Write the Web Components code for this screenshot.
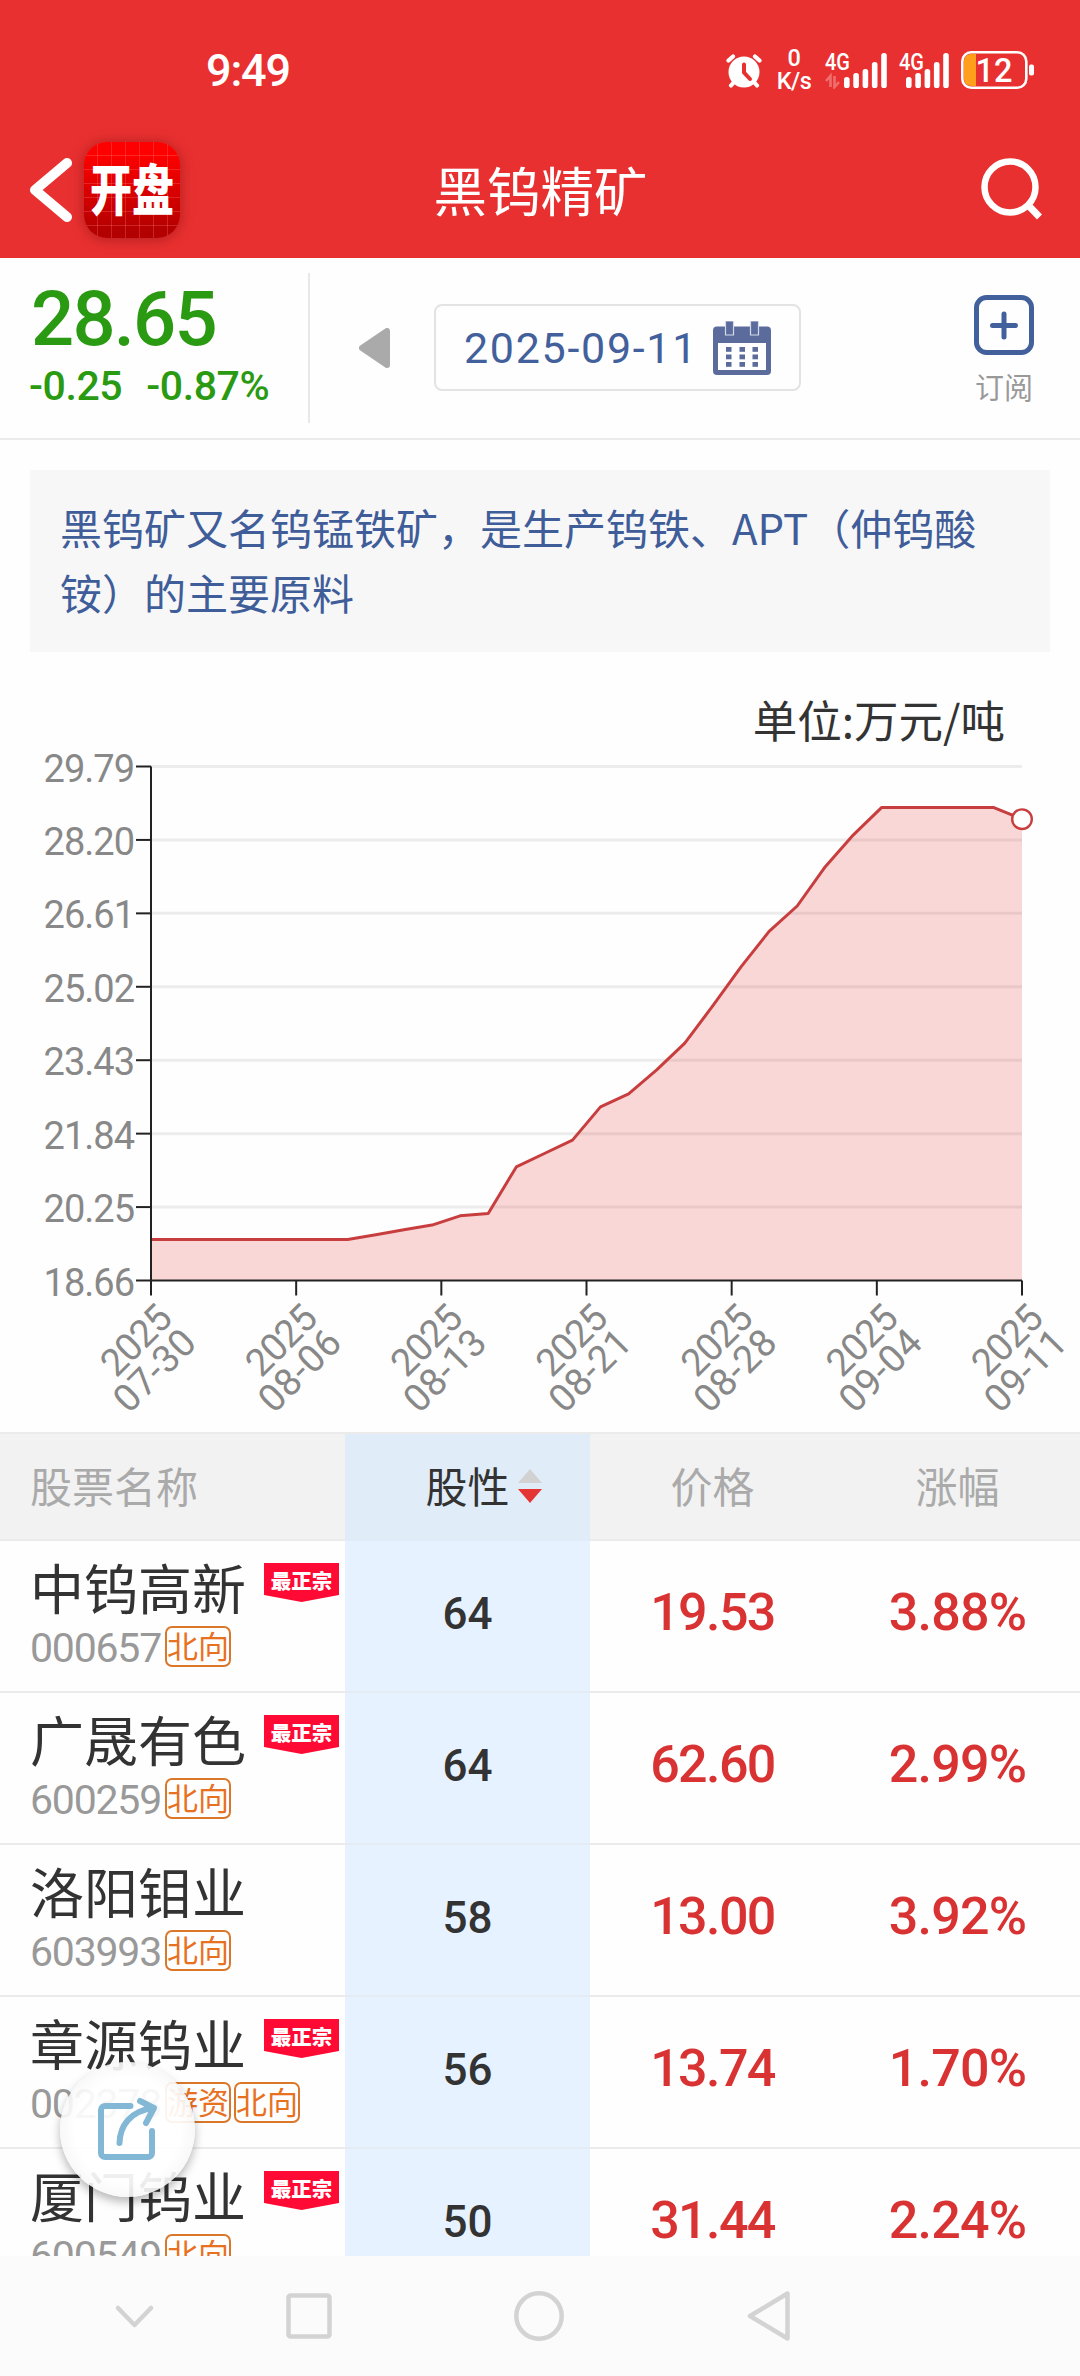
<!DOCTYPE html>
<html lang="zh-CN">
<head>
<meta charset="utf-8">
<title>黑钨精矿</title>
<style>
	body {
		--cjk: "Noto Sans CJK SC", sans-serif;
		--num: Roboto, "Noto Sans CJK SC", sans-serif;
		--red: #e93030;
		--line: #ebebec;
		margin: 0;
		width: 1080px;
		height: 2376px;
		overflow: hidden;
		display: flex;
		flex-direction: column;
		background: #fefefe;
		color: #333;
		font-family: var(--cjk);
	}
</style>
</head>
<body>
	<app-header>黑钨精矿</app-header>
	<price-summary price="28.65" change="-0.25" percent="-0.87%" date="2025-09-11">订阅</price-summary>
	<info-note>黑钨矿又名钨锰铁矿，是生产钨铁、APT（仲钨酸铵）的主要原料</info-note>
	<price-chart unit="单位:万元/吨"></price-chart>
	<stock-table>
		<stock-row code="000657" score="64" price="19.53" rise="3.88%" tags="北向" best>中钨高新</stock-row>
		<stock-row code="600259" score="64" price="62.60" rise="2.99%" tags="北向" best>广晟有色</stock-row>
		<stock-row code="603993" score="58" price="13.00" rise="3.92%" tags="北向">洛阳钼业</stock-row>
		<stock-row code="002378" score="56" price="13.74" rise="1.70%" tags="游资 北向" best>章源钨业</stock-row>
		<stock-row code="600549" score="50" price="31.44" rise="2.24%" tags="北向" best>厦门钨业</stock-row>
	</stock-table>
	<share-button></share-button>
	<nav-bar></nav-bar>

<script>
(() => {
	// registers an element whose shadow root is built by render(el)
	const define = (name, render) => {
		!customElements.get(name) &&
			customElements.define(
				name,
				class extends HTMLElement {
					constructor() {
						super();
						this.sr = this.attachShadow({ mode: "open" });
					}

					connectedCallback() {
						this.sr.innerHTML = render(this);
					}
				}
			);
	};

	define("status-bar", () => {
		const bars = [11, 15, 19, 26, 35]
			.map((h, i) => `<rect x="${i * 9.3}" y="${35 - h}" width="5.6" height="${h}" rx="2.6"/>`)
			.join("");
		return `
			<style>
				:host {
					display: flex;
					align-items: center;
					height: 140px;
					padding: 0 46px 0 206px;
					color: #fff;
					font-family: var(--num);
				}
				.time { font-size: 45px; font-weight: 500; letter-spacing: -1.2px; margin-right: auto }
				svg { display: block; fill: currentcolor }
				.speed {
					width: 36px;
					margin: 0 13px 0 14px;
					text-align: center;
					font-size: 23.500px;
					line-height: 23px;
				}
				.speed div { font-weight: 500; letter-spacing: -0.5px }
				.battery { margin-left: 12px }
				text { font-weight: 500 }
			</style>
			<span class="time">9:49</span>
			<svg width="36" height="36" viewBox="0 0 36 36">
				<circle cx="18" cy="20" r="15.5"/>
				<g fill="none" stroke="currentcolor" stroke-width="4.2" stroke-linecap="round">
					<path d="M2.5 8.500L7 4.500M33.500 8.500L29 4.500M8 30L5 33.500M28 30L31 33.500"/>
					<path d="M18 12.500V20.500L24 27" stroke="#e93030" stroke-width="4"/>
				</g>
			</svg>
			<div class="speed"><div>0</div><div>K/s</div></div>
			<svg width="63" height="37" viewBox="0 0 63 37">
				<text x="0" y="18" font-size="23.500" textLength="25" lengthAdjust="spacingAndGlyphs">4G</text>
				<path d="M5.500 35V24L1 29M9.500 24V35L14 30" fill="none" stroke="#fff" stroke-width="2.600" opacity=".3"/>
				<g transform="translate(19,1)">${bars}</g>
			</svg>
			<svg width="50" height="37" viewBox="0 0 50 37" style="margin-left:11px">
				<text x="0" y="18" font-size="23.500" textLength="25" lengthAdjust="spacingAndGlyphs">4G</text>
				<g transform="translate(7,1)">${bars}</g>
			</svg>
			<svg class="battery" width="73" height="38" viewBox="0 0 73 38">
				<path d="M15 3H10a7 7 0 0 0-7 7v18a7 7 0 0 0 7 7h5z" fill="#ff9f1c"/>
				<rect x="1.300" y="1.300" width="64" height="35.400" rx="9" fill="none" stroke="#fff" stroke-width="2.600"/>
				<rect x="68" y="13.500" width="5" height="11" rx="2"/>
				<text x="33" y="30.500" font-size="32.500" text-anchor="middle">12</text>
			</svg>
		`;
	});

	define("app-logo", () => `
		<style>
			:host {
				display: grid;
				place-items: center;
				width: 96px;
				height: 96px;
				border-radius: 23px;
				box-shadow: 0 1px 14px rgba(90, 0, 0, .4);
				background:
					repeating-linear-gradient(90deg, transparent 0 13px, rgba(255, 120, 120, .3) 13px 14px),
					repeating-linear-gradient(transparent 0 13px, rgba(255, 120, 120, .3) 13px 14px),
					linear-gradient(#f00 12%, #b30000 92%);
			}
			b {
				color: #fff;
				font: 900 42px/42px var(--cjk);
				transform: scaleY(1.3);
				margin-top: -6px;
			}
		</style>
		<b>开盘</b>
	`);

	define("app-header", () => `
		<style>
			:host { display: block; height: 258px; background: var(--red); color: #fff }
			header {
				display: grid;
				grid-template-columns: 1fr auto 1fr;
				align-items: center;
				height: 100px;
				padding: 0 35px 0 28px;
			}
			.left { display: flex; align-items: center; gap: 10px }
			h1 { margin: 0 0 3px; font-size: 53.500px; font-weight: 400; line-height: 80px; transform: translateX(4px) }
			svg { fill: none; stroke: currentcolor; stroke-linecap: round; stroke-linejoin: round }
			.search { justify-self: end }
		</style>
		<status-bar></status-bar>
		<header>
			<div class="left">
				<svg width="46" height="66" viewBox="0 0 46 66"><path d="M39 6L7 33L39 60" stroke-width="10"/></svg>
				<app-logo></app-logo>
			</div>
			<h1><slot></slot></h1>
			<svg class="search" width="64" height="66" viewBox="0 0 64 66">
				<circle cx="29" cy="30" r="25.500" stroke-width="6.500"/>
				<path d="M47 48L58.500 60" stroke-width="7" stroke-linecap="butt"/>
			</svg>
		</header>
	`);

	define("price-summary", (el) => {
		const dots = [25, 32.5, 40]
			.map((y) => [13, 26.5, 39.5].map((x) => `<rect x="${x}" y="${y + 1}" width="5.500" height="4.800"/>`).join(""))
			.join("");
		return `
			<style>
				:host {
					box-sizing: border-box;
					display: flex;
					height: 182px;
					border-bottom: 2px solid var(--line);
					font-family: var(--num);
				}
				.quote {
					box-sizing: border-box;
					width: 310px;
					height: 150px;
					margin-top: 15px;
					padding: 5px 0 0 29px;
					border-right: 2px solid #e8e8e8;
					color: #299a11;
					font-weight: 500;
				}
				.price { margin-left: 2px; font-size: 76px; line-height: 82px; letter-spacing: -1.800px }
				.diff { display: flex; gap: 24px; font-size: 41px; line-height: 52px; letter-spacing: -0.400px }
				.prev { margin: 70px 44px 0 49px }
				.date {
					box-sizing: border-box;
					display: flex;
					align-items: center;
					justify-content: space-between;
					width: 367px;
					height: 87px;
					margin-top: 46px;
					padding: 0 28px;
					border: 2px solid #e3e3e3;
					border-radius: 8px;
					color: #42609b;
					font-size: 43px;
					letter-spacing: 1.700px;
				}
				.sub {
					margin: 37px 46px 0 auto;
					display: flex;
					flex-direction: column;
					align-items: center;
					gap: 12px;
					color: #999;
					font: 29px/38px var(--cjk);
				}
				svg { display: block }
			</style>
			<div class="quote">
				<div class="price">${el.getAttribute("price")}</div>
				<div class="diff"><span>${el.getAttribute("change")}</span><span>${el.getAttribute("percent")}</span></div>
			</div>
			<svg class="prev" width="31" height="40" viewBox="0 0 31 40">
				<path d="M3 20L28 3V37z" fill="#aaa" stroke="#aaa" stroke-width="6" stroke-linejoin="round"/>
			</svg>
			<div class="date">
				<span>${el.getAttribute("date")}</span>
				<svg width="58" height="54" viewBox="0 0 58 54">
					<rect y="5.500" width="58" height="48.500" rx="4" fill="#5b6b9b"/>
					<rect x="5" y="22" width="48" height="27" fill="#fff"/>
					<path d="M12.500 0h8v14h-8zM37.500 0h8v14h-8z" fill="#5b6b9b" stroke="#d5daea" stroke-width="1.200"/>
					<g fill="#5b6b9b">${dots}</g>
				</svg>
			</div>
			<div class="sub">
				<svg width="60" height="60" viewBox="0 0 60 60" fill="none" stroke="#42609b" stroke-width="5">
					<rect x="2.500" y="2.500" width="55" height="55" rx="10"/>
					<path d="M30 19V42M18.500 30.500H41.500" stroke-linecap="round"/>
				</svg>
				<slot></slot>
			</div>
		`;
	});

	define("info-note", () => `
		<style>
			:host {
				box-sizing: border-box;
				display: block;
				height: 182px;
				margin: 30px 30px 0;
				padding: 24px 30px;
				background: #f7f7f8;
				color: #3f5d98;
				font-size: 42px;
				line-height: 65px;
			}
		</style>
		<slot></slot>
	`);

	define("price-chart", (el) => {
		const values = [
			19.55, 19.55, 19.55, 19.55, 19.55, 19.55, 19.55, 19.55, 19.65, 19.76, 19.86,
			20.06, 20.11, 21.12, 21.41, 21.7, 22.42, 22.7, 23.22, 23.8, 24.61, 25.45,
			26.22, 26.77, 27.62, 28.31, 28.9, 28.9, 28.9, 28.9, 28.9, 28.65
		];
		const ticks = ["29.79", "28.20", "26.61", "25.02", "23.43", "21.84", "20.25", "18.66"];
		const dates = ["07-30", "08-06", "08-13", "08-21", "08-28", "09-04", "09-11"];
		const left = 151, right = 1022, top = 14.5, bottom = 528.5;
		const x = (i) => left + ((right - left) * i) / (values.length - 1);
		const y = (v) => bottom - ((v - 18.66) / (29.79 - 18.66)) * (bottom - top);
		const line = values.map((v, i) => `${x(i).toFixed(1)} ${y(v).toFixed(1)}`).join("L");
		const rows = ticks.map((t, i) => {
			const ty = top + ((bottom - top) * i) / 7;
			return `
				${i < 7 ? `<path d="M${left} ${ty}H${right}" stroke="#ececec" stroke-width="3"/>` : ""}
				<path d="M136 ${ty}H${left}" stroke="#222" stroke-width="2"/>
				<text x="134" y="${ty + 15}" text-anchor="end">${t}</text>
			`;
		});
		const cols = dates.map((d, i) => {
			const tx = left + ((right - left) * i) / 6;
			return `
				<path d="M${tx} ${bottom}v15" stroke="#222" stroke-width="2"/>
				<g transform="translate(${tx + 12.5} ${bottom + 31.5}) rotate(-45)">
					<text x="1" y="13.500" text-anchor="end">2025</text>
					<text class="day" x="2" y="48" text-anchor="end">${d}</text>
				</g>
			`;
		});
		return `
			<style>
				:host { display: block; height: 780px; flex: none }
				.unit {
					height: 100px;
					padding: 17px 75px 0 0;
					box-sizing: border-box;
					text-align: right;
					font-size: 44.500px;
					line-height: 100px;
				}
				svg { display: block; overflow: visible }
				text { font: 38px var(--num); fill: #888; letter-spacing: -1px }
				.day { letter-spacing: 0.600px }
			</style>
			<div class="unit">${el.getAttribute("unit")}</div>
			<svg width="1080" height="680" viewBox="0 0 1080 680" fill="none">
				${rows.join("")}
				<path d="M${line}V${bottom}H${left}z" fill="#e93030" fill-opacity=".19"/>
				<path d="M${line}" stroke="#c83e3e" stroke-width="3" stroke-linejoin="round"/>
				<path d="M${left} ${top}V${bottom}H${right}" stroke="#222" stroke-width="2"/>
				${cols.join("")}
				<circle cx="${right}" cy="${y(28.65)}" r="9.800" fill="#fff" stroke="#c83e3e" stroke-width="2.400"/>
			</svg>
		`;
	});

	define("stock-table", () => `
		<style>
			:host { display: block; flex: 1; min-height: 0; overflow: hidden }
			.head {
				box-sizing: border-box;
				display: grid;
				grid-template-columns: 345px repeat(3, 245px);
				height: 109px;
				border: solid var(--line);
				border-width: 2px 0;
				background: #f2f2f2;
				color: #aaa;
				font-size: 42px;
				line-height: 101px;
				text-align: center;
			}
			.name { text-align: left; padding-left: 30px }
			.sort { position: relative; background: #e0ecf8; color: #333; height: 107px }
			.sort svg { position: absolute; left: 173px; top: 35px }
		</style>
		<div class="head">
			<span class="name">股票名称</span>
			<span class="sort">股性<svg width="24" height="34" viewBox="0 0 24 34"><path d="M0 14L12 0L24 14z" fill="#d2d2d2"/><path d="M0 20H24L12 34z" fill="#e53434"/></svg></span>
			<span>价格</span>
			<span>涨幅</span>
		</div>
		<slot></slot>
	`);

	define("stock-row", (el) => `
		<style>
			:host {
				display: grid;
				grid-template-columns: 345px repeat(3, 245px);
				height: 152px;
				font-family: var(--num);
			}
			:host > * { box-sizing: border-box; border-bottom: 2px solid var(--line) }
			.stock { padding: 4px 0 0 30px }
			.title { display: flex; gap: 18px; height: 81px; font: 54px/84px var(--cjk) }
			.best {
				width: 75px;
				height: 39px;
				margin-top: 18px;
				background: #ff0a35;
				clip-path: polygon(0 0, 100% 0, 100% 82%, 50% 100%, 0 82%);
				color: #fff;
				font: 900 20.500px/34px var(--cjk);
				text-align: center;
			}
			.meta { display: flex; gap: 3px; color: #999; font-size: 41px; line-height: 44px }
			.code { width: 132px; letter-spacing: -1.200px; white-space: nowrap }
			.tag {
				box-sizing: border-box;
				width: 66px;
				height: 41px;
				border: 2px solid #d9772b;
				border-radius: 7px;
				color: #e8711f;
				font: 31px/34px var(--cjk);
				text-align: center;
			}
			.num {
				line-height: 144px;
				text-align: center;
				font-weight: 500;
				font-size: 52px;
				letter-spacing: -1.600px;
				color: #d93232;
			}
			.rise { letter-spacing: -0.800px }
			.score {
				background: #e6f2ff;
				border-color: #e4ebf3;
				color: #333;
				font-size: 44px;
				line-height: 147px;
				letter-spacing: 0;
			}
		</style>
		<div class="stock">
			<div class="title"><slot></slot>${el.hasAttribute("best") ? `<span class="best">最正宗</span>` : ""}</div>
			<div class="meta">
				<span class="code">${el.getAttribute("code")}</span>
				${el.getAttribute("tags").split(" ").map((t) => `<span class="tag">${t}</span>`).join("")}
			</div>
		</div>
		<div class="num score">${el.getAttribute("score")}</div>
		<div class="num">${el.getAttribute("price")}</div>
		<div class="num rise">${el.getAttribute("rise")}</div>
	`);

	// floats over the list
	define("share-button", () => `
		<style>
			:host {
				position: absolute;
				left: 60px;
				top: 2062px;
				width: 135px;
				height: 135px;
				border-radius: 50%;
				background: radial-gradient(rgba(255, 255, 255, .92) 55%, rgba(248, 248, 248, .9) 70%);
				box-shadow: 0 5px 10px rgba(0, 0, 0, .28);
			}
			svg { display: block }
		</style>
		<svg width="135" height="135" viewBox="0 0 135 135" fill="none" stroke="#82b8d6" stroke-width="6" stroke-linecap="round" stroke-linejoin="round">
			<path d="M70.500 44H45a4 4 0 0 0-4 4v43a4 4 0 0 0 4 4h43a4 4 0 0 0 4-4V69"/>
			<path d="M59.500 81C60 64 70 49 93 46M80 39L94 46L86 61"/>
		</svg>
	`);

	define("nav-bar", () => `
		<style>
			:host {
				box-sizing: border-box;
				display: grid;
				grid-template-columns: 171px 228px 232px 46px;
				align-items: center;
				flex: none;
				height: 120px;
				padding-left: 115px;
				background: #fbfbfb;
			}
			svg { display: block; fill: none; stroke: #d3d3d3; stroke-width: 4.500; stroke-linecap: round; stroke-linejoin: round }
		</style>
		<svg width="40" height="50" viewBox="0 0 40 50"><path d="M3 17L19.500 34L36 17"/></svg>
		<svg width="46" height="50" viewBox="0 0 46 50"><rect x="2.500" y="4.500" width="41" height="41" rx="2"/></svg>
		<svg width="50" height="50" viewBox="0 0 50 50"><circle cx="25" cy="25" r="22.700"/></svg>
		<svg width="46" height="50" viewBox="0 0 46 50"><path d="M4 25L41.500 2.500V47.500z"/></svg>
	`);
})();
</script>
</body>
</html>
